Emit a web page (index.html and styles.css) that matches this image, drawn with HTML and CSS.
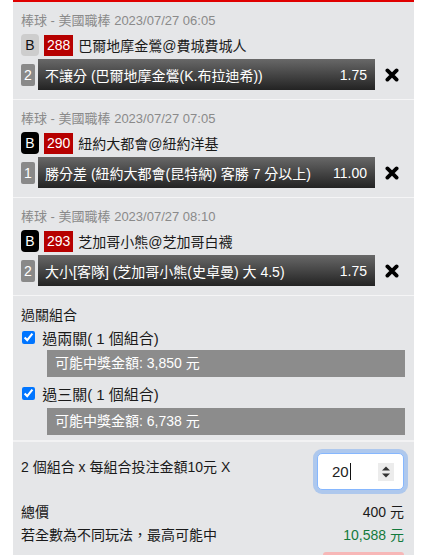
FILE: index.html
```html
<!DOCTYPE html>
<html lang="zh-Hant">
<head>
<meta charset="utf-8">
<title>投注單</title>
<link rel="stylesheet" href="styles.css">
</head>
<body>
<div class="slip">
  <section class="bet">
    <div class="league">棒球 - 美國職棒 2023/07/27 06:05</div>
    <div class="match"><span class="tag tag-light">B</span><span class="code">288</span><span class="teams">巴爾地摩金鶯@費城費城人</span></div>
    <div class="pick">
      <span class="qty">2</span>
      <div class="bar"><span>不讓分 (巴爾地摩金鶯(K.布拉迪希))</span><span>1.75</span></div>
      <span class="remove"><svg viewBox="0 0 14 14" width="14" height="14"><path d="M2.4 2.4L11.6 11.6M11.6 2.4L2.4 11.6" stroke="#000" stroke-width="3.8" stroke-linecap="round"/></svg></span>
    </div>
  </section>
  <section class="bet">
    <div class="league">棒球 - 美國職棒 2023/07/27 07:05</div>
    <div class="match"><span class="tag tag-dark">B</span><span class="code">290</span><span class="teams">紐約大都會@紐約洋基</span></div>
    <div class="pick">
      <span class="qty">1</span>
      <div class="bar"><span>勝分差 (紐約大都會(昆特納) 客勝 7 分以上)</span><span>11.00</span></div>
      <span class="remove"><svg viewBox="0 0 14 14" width="14" height="14"><path d="M2.4 2.4L11.6 11.6M11.6 2.4L2.4 11.6" stroke="#000" stroke-width="3.8" stroke-linecap="round"/></svg></span>
    </div>
  </section>
  <section class="bet">
    <div class="league">棒球 - 美國職棒 2023/07/27 08:10</div>
    <div class="match"><span class="tag tag-dark">B</span><span class="code">293</span><span class="teams">芝加哥小熊@芝加哥白襪</span></div>
    <div class="pick">
      <span class="qty">2</span>
      <div class="bar"><span>大小[客隊] (芝加哥小熊(史卓曼) 大 4.5)</span><span>1.75</span></div>
      <span class="remove"><svg viewBox="0 0 14 14" width="14" height="14"><path d="M2.4 2.4L11.6 11.6M11.6 2.4L2.4 11.6" stroke="#000" stroke-width="3.8" stroke-linecap="round"/></svg></span>
    </div>
  </section>
  <section class="combo">
    <div class="combo-title">過關組合</div>
    <label class="combo-row"><input type="checkbox" checked> 過兩關( 1 個組合)</label>
    <div class="prize">可能中獎金額: 3,850 元</div>
    <label class="combo-row second"><input type="checkbox" checked> 過三關( 1 個組合)</label>
    <div class="prize second">可能中獎金額: 6,738 元</div>
  </section>
  <section class="summary">
    <div class="stake">
      <div class="stake-text">2 個組合 x 每組合投注金額10元 X</div>
      <div class="qty-box">
        <span class="qty-value">20</span><span class="caret"></span>
        <span class="spin"><svg viewBox="0 0 16 18" width="16" height="18"><path d="M8 3.5L12 7.5H4Z M8 14.5L12 10.5H4Z" fill="#333"/></svg></span>
      </div>
    </div>
    <div class="line line-total"><span>總價</span><span>400 元</span></div>
    <div class="line"><span>若全數為不同玩法，最高可能中</span><span class="win">10,588 元</span></div>
    <div class="submit-row"><div class="submit"></div></div>
  </section>
</div>
</body>
</html>
```
FILE: styles.css
```css
body {
  margin: 0;
  background: #fff;
  font-family: "Liberation Sans", "Noto Sans CJK TC", sans-serif;
  color: #1a1a1a;
}

.slip {
  margin-left: 13px;
  width: 401px;
  background: #e5e6e8;
  border-top: 2px solid #e00000;
}

.bet {
  padding: 10px 0 9px 8px;
  border-bottom: 1px solid #f5f5f6;
}

.league {
  font-size: 13px;
  line-height: 18px;
  color: #8a8a8a;
}

.match {
  display: flex;
  align-items: center;
  height: 22px;
  margin-top: 4px;
  font-size: 14px;
}

.tag {
  width: 18px;
  height: 22px;
  border-radius: 4px;
  display: flex;
  align-items: center;
  justify-content: center;
  margin-right: 5px;
}

.tag-light {
  background: #cdcdcd;
  color: #111;
}

.tag-dark {
  background: #000;
  color: #fff;
}

.code {
  background: #b60000;
  color: #fff;
  height: 21px;
  line-height: 21px;
  padding: 0 3px;
  margin-right: 5px;
}

.teams {
  color: #1a1a1a;
}

.pick {
  display: flex;
  align-items: center;
  height: 31px;
  margin-top: 3px;
}

.qty {
  width: 14px;
  height: 22px;
  background: #898989;
  color: #fff;
  font-size: 14px;
  line-height: 22px;
  text-align: center;
  border-radius: 2px;
}

.bar {
  margin-left: 3px;
  width: 337px;
  height: 31px;
  box-sizing: border-box;
  padding: 0 8px 0 7px;
  display: flex;
  align-items: center;
  justify-content: space-between;
  background: linear-gradient(#686868, #232323);
  color: #fff;
  font-size: 14px;
}

.remove {
  margin-left: 10px;
  width: 14px;
  height: 14px;
  display: flex;
}

.combo {
  padding: 10px 9px 5px 8px;
  border-bottom: 2px solid #f2f2f3;
  font-size: 14px;
}

.combo-title {
  line-height: 18px;
}

.combo-row {
  display: flex;
  align-items: center;
  height: 24px;
  margin-top: 1px;
  font-size: 15px;
  white-space: pre;
}

.combo-row input {
  margin: 0 3px 0 1px;
  width: 13px;
  height: 13px;
}

.combo-row.second {
  margin-top: 4px;
}

.prize {
  margin: 1px 0 0 26px;
  height: 27px;
  line-height: 27px;
  padding-left: 8px;
  background: #8c8c8c;
  color: #fff;
}

.prize.second {
  margin-top: 3px;
}

.summary {
  padding: 11px 10px 0 8px;
  font-size: 14px;
}

.stake {
  display: flex;
  justify-content: space-between;
  align-items: flex-start;
}

.stake-text {
  margin-top: 4px;
  line-height: 20px;
}

.qty-box {
  width: 87px;
  height: 37px;
  box-sizing: border-box;
  border: 1px solid #86b7fe;
  border-radius: 5px;
  box-shadow: 0 0 0 4px rgba(13, 110, 253, 0.25);
  background: #fff;
  display: flex;
  align-items: center;
  padding-left: 14px;
  font-size: 15px;
  color: #222;
}

.caret {
  width: 1px;
  height: 17px;
  background: #111;
  margin-left: 1px;
}

.spin {
  margin-left: 27px;
  width: 16px;
  height: 18px;
  background: #ececec;
  display: flex;
}

.line {
  display: flex;
  justify-content: space-between;
  line-height: 23px;
}

.line-total {
  margin-top: 11px;
}

.win {
  color: #137a3c;
}

.submit-row {
  display: flex;
  justify-content: flex-end;
  margin-top: 5px;
}

.submit {
  width: 81px;
  height: 34px;
  background: #f7b7b7;
  border-radius: 3px 3px 0 0;
}
```
